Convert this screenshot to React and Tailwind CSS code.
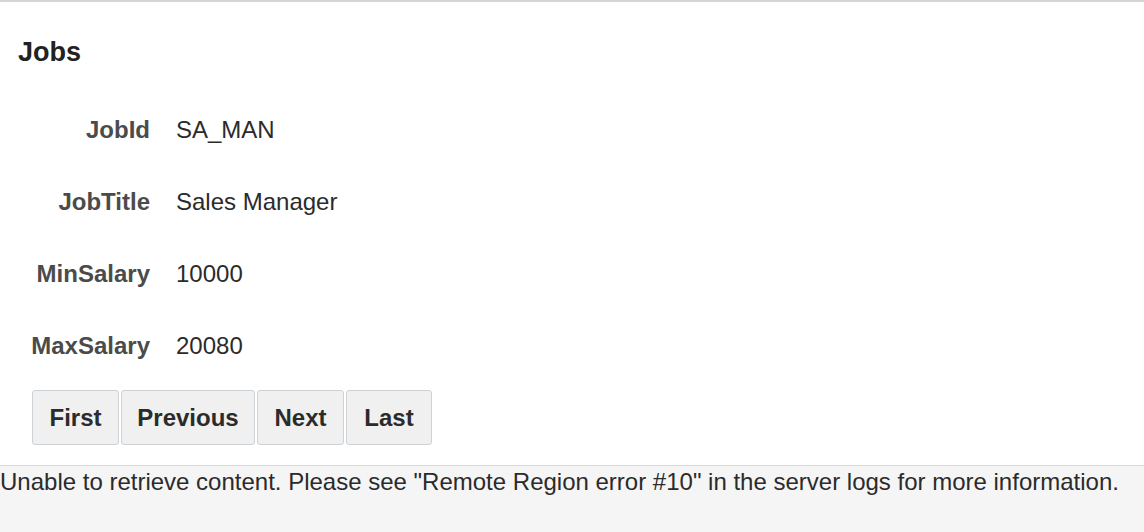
export default function App() {
  const rows = [
    ["JobId", "SA_MAN"],
    ["JobTitle", "Sales Manager"],
    ["MinSalary", "10000"],
    ["MaxSalary", "20080"],
  ];
  const buttons = [
    ["First", "w-[87px]"],
    ["Previous", "w-[134px]"],
    ["Next", "w-[87px]"],
    ["Last", "w-[86px]"],
  ];
  return (
    <div className="w-[1144px] h-[532px] bg-white flex flex-col overflow-hidden" style={{ fontFamily: '"Liberation Sans", Arial, sans-serif' }}>
      <div className="border-t-2 border-[#d3d6d9]" />
      <h1 className="pl-[18px] pt-[35px] text-[27px] leading-[30px] font-bold text-[#222]">Jobs</h1>
      <div className="mt-[27px] flex flex-col">
        {rows.map(([label, value]) => (
          <div key={label} className="h-[72px] flex items-center text-[24px] leading-[28px]">
            <div className="w-[150px] text-right font-bold text-[#4b4b4b]">{label}</div>
            <div className="ml-[26px] text-[#2b2b2b]">{value}</div>
          </div>
        ))}
      </div>
      <div className="mt-[8px] pl-[32px] flex gap-[2px]">
        {buttons.map(([b, w]) => (
          <button key={b} className={`${w} h-[55px] border border-[#cdd2d6] rounded-[3px] bg-[#f0f0f0] text-[24px] font-bold text-[#2b2b2b] flex items-center justify-center`}>
            {b}
          </button>
        ))}
      </div>
      <div className="mt-[20px] flex-1 border-t border-[#d6d9dc] bg-[#f5f5f5] pt-[2px] text-[24px] leading-[28px] text-[#2b2b2b]">
        Unable to retrieve content. Please see "Remote Region error #10" in the server logs for more information.
      </div>
    </div>
  );
}
